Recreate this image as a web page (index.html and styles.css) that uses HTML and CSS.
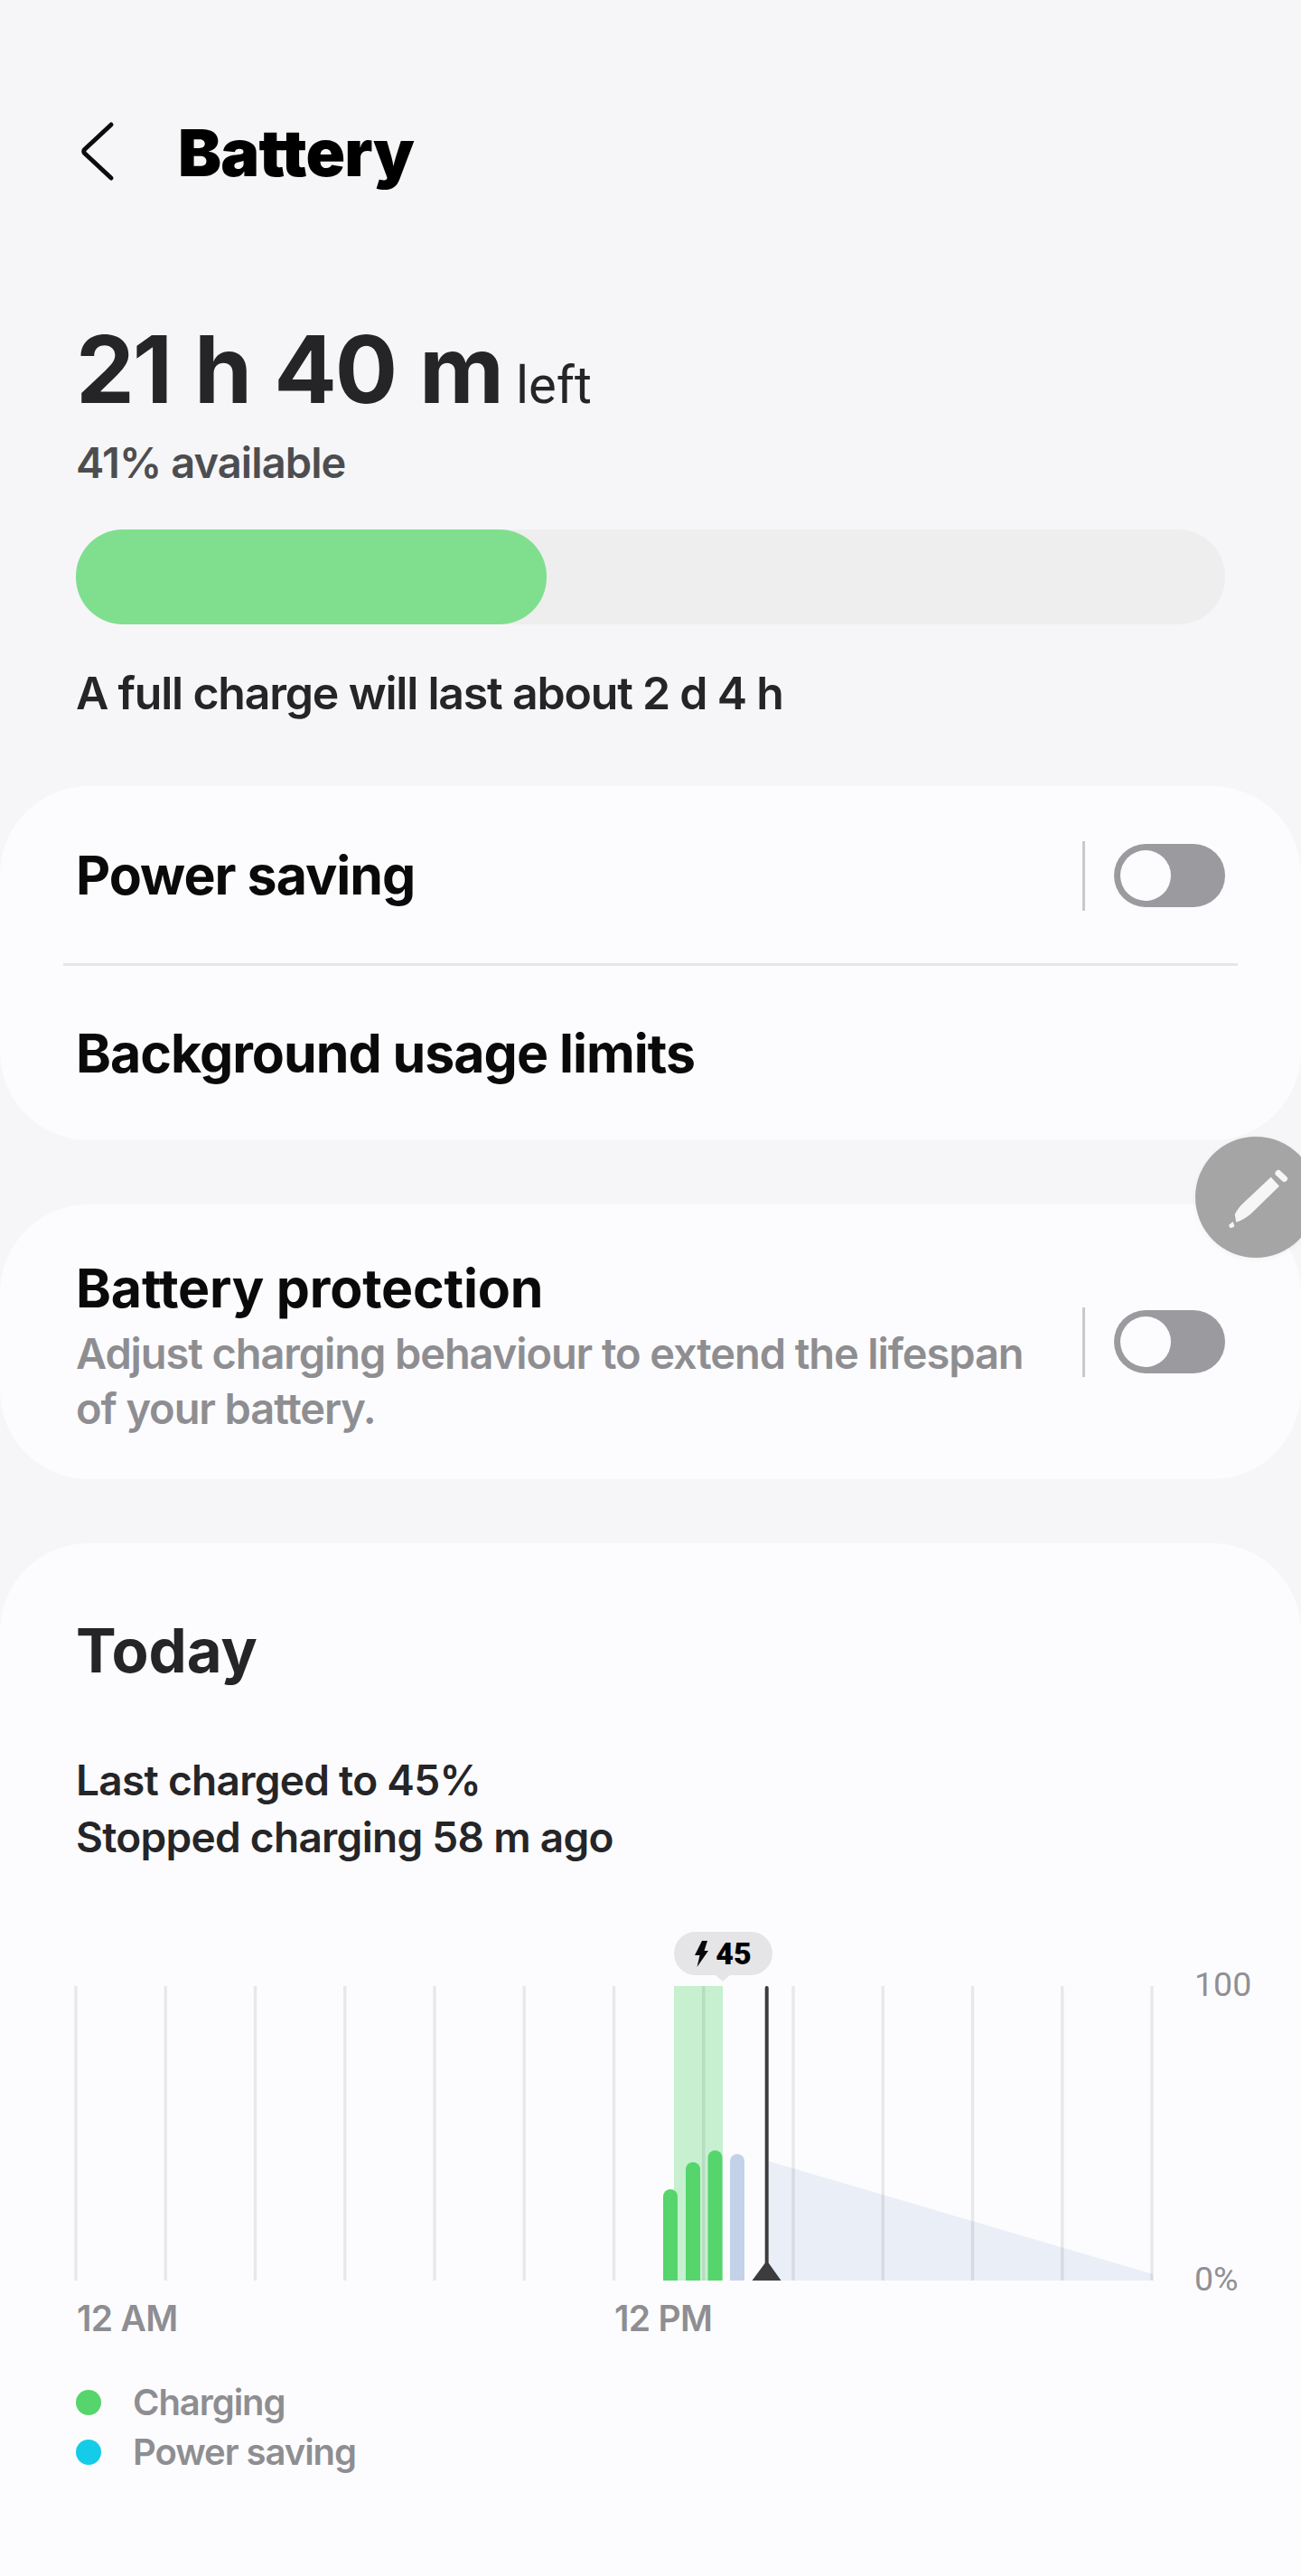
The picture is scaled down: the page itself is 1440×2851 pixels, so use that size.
FILE: index.html
```html
<!DOCTYPE html>
<html lang="en">
<head>
<meta charset="utf-8">
<title>Battery</title>
<link rel="stylesheet" href="styles.css">
</head>
<body>
<div class="page">
  <header class="topbar">
    <svg class="back" viewBox="0 0 40 70" width="40" height="70" aria-hidden="true"><path d="M36 6 L6.500 33.500 Q5 35.500 6.500 37.500 L36 65"/></svg>
    <h1 class="title">Battery</h1>
  </header>

  <section class="hero">
    <p class="time">21 h 40 m<span class="left">left</span></p>
    <p class="avail">41% available</p>
    <div class="meter"><div class="meter-fill"></div></div>
    <p class="charge">A full charge will last about 2 d 4 h</p>
  </section>

  <section class="card card-one">
    <div class="row row-top">
      <span class="row-title">Power saving</span>
      <div class="switch-wrap"><span class="sep"></span><span class="toggle"><span class="thumb"></span></span></div>
    </div>
    <div class="divider"></div>
    <div class="row row-bottom">
      <span class="row-title">Background usage limits</span>
    </div>
  </section>

  <section class="card card-two">
    <div class="protect-text">
      <div class="protect-title">Battery protection</div>
      <p class="protect-sub">Adjust charging behaviour to extend the lifespan of your battery.</p>
    </div>
    <div class="switch-wrap"><span class="sep"></span><span class="toggle"><span class="thumb"></span></span></div>
  </section>

  <section class="card card-today">
    <h2 class="today">Today</h2>
    <p class="last">Last charged to 45%<br>Stopped charging 58 m ago</p>
    <div class="chart">
      <svg class="chart-svg" viewBox="0 2130 1440 410" width="1440" height="410" aria-hidden="true">
        <rect class="band" x="746" y="2198" width="54" height="326"/>
        <polygon class="forecast" points="851,2392 1276,2517 1276,2524 851,2524"/>
        <g class="grid">
          <rect x="82.300" y="2198" width="3.400" height="326"/>
          <rect x="181.550" y="2198" width="3.400" height="326"/>
          <rect x="280.800" y="2198" width="3.400" height="326"/>
          <rect x="380.050" y="2198" width="3.400" height="326"/>
          <rect x="479.300" y="2198" width="3.400" height="326"/>
          <rect x="578.550" y="2198" width="3.400" height="326"/>
          <rect x="677.800" y="2198" width="3.400" height="326"/>
          <rect x="777.050" y="2198" width="3.400" height="326"/>
          <rect x="876.300" y="2198" width="3.400" height="326"/>
          <rect x="975.550" y="2198" width="3.400" height="326"/>
          <rect x="1074.800" y="2198" width="3.400" height="326"/>
          <rect x="1174.050" y="2198" width="3.400" height="326"/>
          <rect x="1273.300" y="2198" width="3.400" height="326"/>
        </g>
        <path class="bar-green" d="M734 2524 V2431 a8 8 0 0 1 16 0 V2524 Z"/>
        <path class="bar-green" d="M759 2524 V2401 a8 8 0 0 1 16 0 V2524 Z"/>
        <path class="bar-green" d="M783.500 2524 V2388 a8 8 0 0 1 16 0 V2524 Z"/>
        <path class="bar-blue" d="M808 2524 V2392 a8 8 0 0 1 16 0 V2524 Z"/>
        <rect class="now" x="846.700" y="2198" width="4" height="320" rx="2"/>
        <path class="now" d="M832.500 2524 L846.500 2505 Q848.700 2502 851 2505 L864.500 2524 Z"/>
      </svg>
      <div class="pill">
        <svg class="bolt" viewBox="0 0 15 29" width="15" height="29" aria-hidden="true"><path d="M8 0 L14 0 L10.500 11 L15 11 L2.500 29 L5.500 16 L0 16 Z"/></svg>
        <span class="pill-num">45</span>
      </div>
      <span class="axis axis-top">100</span>
      <span class="axis axis-bottom">0%</span>
    </div>
    <div class="hours"><span>12 AM</span><span>12 PM</span></div>
    <ul class="legend">
      <li class="legend-item"><span class="dot dot-green"></span>Charging</li>
      <li class="legend-item"><span class="dot dot-cyan"></span>Power saving</li>
    </ul>
  </section>

  <div class="fab">
    <svg viewBox="0 0 134 134" width="134" height="134" aria-hidden="true">
      <path class="pencil" d="M83.700 44.700 L93 54.700 L62 85 Q54 92 45.300 94.700 L43.700 86.300 Q47 79 53.700 73 Z"/>
      <path class="pencil" d="M37 98 L41.500 94 L43.500 99 Q41 101.500 38.500 101 Z"/>
      <line class="pencil-cap" x1="92" y1="40.500" x2="98.500" y2="46.500"/>
    </svg>
  </div>
</div>
</body>
</html>
```
FILE: styles.css
```css
* { box-sizing: border-box; }
html, body { margin: 0; padding: 0; }
body { background: #f6f6f8; font-family: Inter, "Noto Sans", sans-serif; color: #252528; }
h1, h2, p, ul { margin: 0; padding: 0; }

.page { position: relative; width: 1440px; height: 2851px; overflow: hidden; background: #f6f6f8; }

.topbar { display: flex; align-items: center; height: 80px; margin-top: 129px; padding-left: 87px; gap: 70px; }
.back { flex: none; margin-top: -5px; }
.back path { fill: none; stroke: #0c0c0c; stroke-width: 5; stroke-linecap: round; stroke-linejoin: round; }
.title { font-size: 72px; line-height: 80px; font-weight: 900; color: #000; letter-spacing: -0.8px; }

.hero { padding: 145px 84px 0; }
.time { font-size: 103px; line-height: 110px; font-weight: 700; letter-spacing: -2.2px; word-spacing: 4px; white-space: nowrap; }
.left { margin-left: 15px; font-family: Roboto, sans-serif; font-size: 58px; line-height: 1; font-weight: 400; letter-spacing: 0; }
.avail { margin-top: 20px; font-size: 47px; line-height: 56px; font-weight: 600; letter-spacing: -0.9px; color: #4d4d50; }
.meter { margin-top: 46px; height: 105px; border-radius: 52px; background: #eeeeef; }
.meter-fill { width: 521px; height: 100%; border-radius: 52px; background: #80df8e; }
.charge { margin-top: 46px; font-size: 50px; line-height: 60px; font-weight: 600; letter-spacing: -1.2px; }

.card { background: #fcfcfe; border-radius: 98px; }
.card-one { margin-top: 73px; }
.row { display: flex; align-items: center; justify-content: space-between; padding: 0 84px; }
.row-top { height: 196px; padding-top: 2px; }
.row-bottom { height: 193px; }
.row-title { font-size: 59px; line-height: 70px; font-weight: 700; letter-spacing: -1px; color: #0a0a0a; }
.divider { height: 3px; margin: 0 70px; background: #e6e6e8; }

.switch-wrap { display: flex; align-items: center; gap: 32px; flex: none; }
.sep { width: 3px; height: 77px; background: #c9c9cb; }
.toggle { display: block; width: 123px; height: 70px; padding: 7px; border-radius: 35px; background: #9b9b9f; }
.thumb { display: block; width: 56px; height: 56px; border-radius: 50%; background: #fcfcfe; }

.card-two { display: flex; align-items: center; justify-content: space-between; margin-top: 71px; height: 304px; padding: 0 84px; }
.protect-text { width: 1080px; padding-top: 10px; }
.protect-title { font-size: 59px; line-height: 70px; font-weight: 700; letter-spacing: -0.2px; color: #0a0a0a; }
.protect-sub { margin-top: 6px; font-size: 47px; line-height: 61px; font-weight: 600; letter-spacing: -1.1px; color: #8e8e92; }

.card-today { margin-top: 71px; height: 1143px; padding-top: 79px; border-bottom-left-radius: 0; border-bottom-right-radius: 0; }
.today { padding-left: 84px; font-size: 67px; line-height: 80px; font-weight: 700; }
.last { margin-top: 72px; padding-left: 84px; font-size: 46px; line-height: 63px; font-weight: 600; letter-spacing: -0.72px; }

.chart { position: relative; margin-top: 65px; height: 410px; }
.chart-svg { display: block; }
.band { fill: #c6f0d0; }
.forecast { fill: #e9eef7; }
.grid rect { fill: rgba(0, 0, 0, 0.08); }
.bar-green { fill: #55d56c; }
.bar-blue { fill: #c3d2e8; }
.now { fill: #3c3c3e; }

.pill { position: absolute; left: 746px; top: 8px; width: 109px; height: 48px; border-radius: 24px; background: #e5e5e7; display: flex; align-items: center; justify-content: center; gap: 8px; }
.pill::after { content: ""; position: absolute; left: 46px; bottom: -7px; width: 0; height: 0; border-left: 8px solid transparent; border-right: 8px solid transparent; border-top: 7px solid #e5e5e7; }
.bolt { flex: none; fill: #0a0a0a; }
.pill-num { font-family: Roboto, sans-serif; font-size: 34px; line-height: 48px; font-weight: 900; color: #000; }

.axis { position: absolute; left: 1322px; font-family: Roboto, sans-serif; font-size: 37.5px; line-height: 44px; color: #909094; }
.axis-top { top: 44px; }
.axis-bottom { top: 370px; }

.hours { display: grid; grid-template-columns: 595px auto; margin-top: 2px; padding-left: 85px; font-size: 39px; line-height: 48px; font-weight: 600; letter-spacing: -0.7px; color: #8e8e92; }

.legend { list-style: none; margin-top: 41px; padding-left: 84px; }
.legend-item { display: flex; align-items: center; gap: 35px; font-size: 40px; line-height: 55px; font-weight: 600; letter-spacing: -1.05px; color: #8e8e92; }
.dot { flex: none; width: 28px; height: 28px; border-radius: 50%; }
.dot-green { background: #55d56c; }
.dot-cyan { background: #14cce8; }

.fab { position: absolute; left: 1323px; top: 1258px; width: 134px; height: 134px; border-radius: 50%; background: #a5a5a6; box-shadow: 0 2px 6px rgba(0, 0, 0, 0.04); }
.fab svg { display: block; }
.pencil { fill: #f6f6f6; }
.pencil-cap { stroke: #f6f6f6; stroke-width: 7; stroke-linecap: round; }
```
